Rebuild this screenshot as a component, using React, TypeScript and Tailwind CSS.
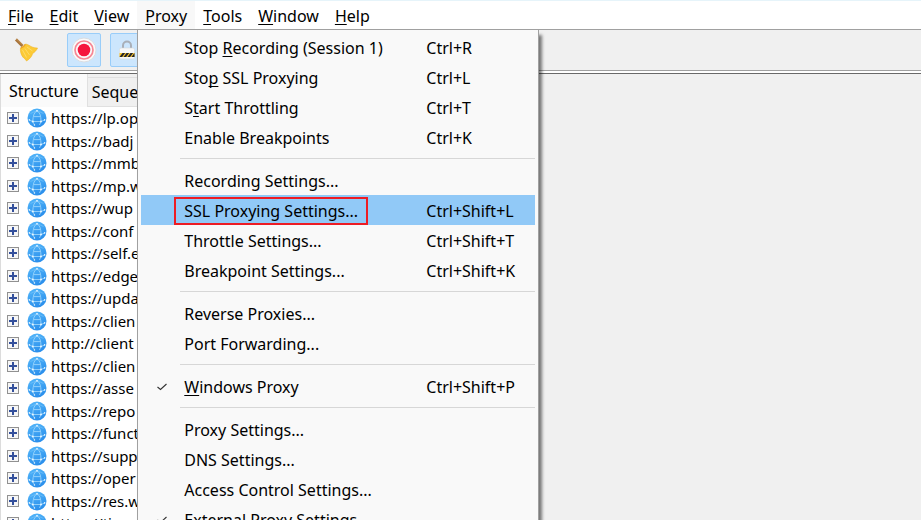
import { Fragment, ReactNode } from 'react';
import clsx from 'clsx';

interface MenuEntry {
    label: string;
    mnemonic?: number;
    shortcut?: string;
    checked?: boolean;
    selected?: boolean;
}

const MENU_BAR = ['File', 'Edit', 'View', 'Proxy', 'Tools', 'Window', 'Help'];

const PROXY_MENU: MenuEntry[][] = [
    [
        { label: 'Stop Recording (Session 1)', mnemonic: 5, shortcut: 'Ctrl+R' },
        { label: 'Stop SSL Proxying', mnemonic: 3, shortcut: 'Ctrl+L' },
        { label: 'Start Throttling', mnemonic: 1, shortcut: 'Ctrl+T' },
        { label: 'Enable Breakpoints', shortcut: 'Ctrl+K' },
    ],
    [
        { label: 'Recording Settings...' },
        { label: 'SSL Proxying Settings...', shortcut: 'Ctrl+Shift+L', selected: true },
        { label: 'Throttle Settings...', shortcut: 'Ctrl+Shift+T' },
        { label: 'Breakpoint Settings...', shortcut: 'Ctrl+Shift+K' },
    ],
    [{ label: 'Reverse Proxies...' }, { label: 'Port Forwarding...' }],
    [{ label: 'Windows Proxy', mnemonic: 0, shortcut: 'Ctrl+Shift+P', checked: true }],
    [
        { label: 'Proxy Settings...' },
        { label: 'DNS Settings...' },
        { label: 'Access Control Settings...' },
        { label: 'External Proxy Settings...', checked: true },
    ],
];

const HOSTS = [
    'https://lp.op',
    'https://badj',
    'https://mmb',
    'https://mp.w',
    'https://wup',
    'https://conf',
    'https://self.e',
    'https://edge',
    'https://upda',
    'https://clien',
    'http://client',
    'https://clien',
    'https://asse',
    'https://repo',
    'https://funct',
    'https://supp',
    'https://oper',
    'https://res.w',
    'https://tip',
];

const Mnemonic = ({ text, index }: { text: string; index?: number }) => {
    if (index === undefined) return <>{text}</>;
    return (
        <>
            {text.slice(0, index)}
            <span className="underline decoration-1 underline-offset-2 [text-decoration-skip-ink:none]">
                {text[index]}
            </span>
            {text.slice(index + 1)}
        </>
    );
};

const BroomIcon = () => (
    <svg width="24" height="24" viewBox="0 0 24 24" aria-hidden="true">
        <path d="M2 1.5 L8.5 8" stroke="#a8743c" strokeWidth="3" />
        <path d="M2.5 1 L8.8 7" stroke="#c79352" strokeWidth="1" />
        <path
            d="M6.5 10 C8.5 9.6 10.5 8 11.5 6 C14 6.4 16 8 18 9 C20 9.8 21.5 10 23.5 10 C22.5 12.5 20.5 14.5 18.6 15.5 C18 18 16 21 12.5 23 C12 21.4 10 20.6 8.8 19 C7 16.6 6 13 6.5 10 Z"
            fill="#fcca36"
            stroke="#f0b322"
            strokeWidth="0.6"
        />
        <path d="M6.8 10 C8.6 9.4 10.4 8 11.3 6.3" fill="none" stroke="#eda521" strokeWidth="1.4" />
        <path
            d="M8.5 12 L12.5 19.5 M11 10.5 L15.5 17 M13 9 L18.5 13"
            stroke="#fddc6a"
            strokeWidth="1"
            fill="none"
        />
    </svg>
);

const RecordIcon = () => (
    <svg width="26" height="26" viewBox="0 0 26 26" aria-hidden="true">
        <circle cx="13" cy="13" r="12" fill="#fafafa" stroke="#d9dde2" strokeWidth="1" />
        <circle cx="13" cy="13" r="9" fill="none" stroke="#f78794" strokeWidth="1.7" />
        <circle cx="13" cy="13" r="6.3" fill="#f5173e" />
    </svg>
);

const LockIcon = () => (
    <svg width="18" height="20" viewBox="0 0 18 20" aria-hidden="true">
        <path d="M5 10 V5.5 a4 4 0 0 1 8 0 V10" fill="none" stroke="#a9afb8" strokeWidth="2" />
        <rect x="1.5" y="8" width="15" height="11" rx="1.5" fill="#f7f7f7" stroke="#d5d8dc" strokeWidth="0.6" />
        <rect x="1.5" y="13" width="15" height="4" fill="#f8c42c" />
        <path
            d="M1.5 17 l3 -4 h2.6 l-3 4z M5.5 17 l3 -4 h2.6 l-3 4z M9.5 17 l3 -4 h2.6 l-3 4z M13.5 17 l3 -4 V17z"
            fill="#22242a"
        />
    </svg>
);

const GlobeIcon = () => (
    <svg className="shrink-0" width="20" height="20" viewBox="0 0 20 20" aria-hidden="true">
        <defs>
            <linearGradient id="globe" x1="0" y1="0" x2="0.4" y2="1">
                <stop offset="0" stopColor="#55b8fa" />
                <stop offset="1" stopColor="#2c90ec" />
            </linearGradient>
        </defs>
        <circle cx="10" cy="10" r="9.5" fill="url(#globe)" />
        <path
            d="M10 2.5 C7 4.5 6 8 5.8 13.5 H14 C14 8 13 4.5 10 2.5 Z M2.2 12 L5.8 13.5 L7.5 17 M14 13.5 L17.8 12 M14 13.5 L12.5 17 M7 8.6 H13"
            fill="none"
            stroke="#a6dafc"
            strokeWidth="0.8"
        />
        <path d="M3.5 5.5 L10 2.5 L16.5 5.5" fill="none" stroke="#7cc8fb" strokeWidth="0.6" />
        <g fill="#e8f6ff">
            <circle cx="10" cy="2.8" r="0.9" />
            <circle cx="5.8" cy="13.5" r="1" />
            <circle cx="14" cy="13.5" r="1" />
            <circle cx="2.4" cy="11.9" r="0.8" />
            <circle cx="17.6" cy="11.9" r="0.8" />
            <circle cx="7.5" cy="17" r="0.7" />
        </g>
    </svg>
);

const ExpandIcon = () => (
    <svg width="12" height="12" viewBox="0 0 12 12" aria-hidden="true">
        <rect x="0.5" y="0.5" width="11" height="11" fill="#f6f6f6" stroke="#919191" />
        <path d="M2 6 H10 M6 2 V10" stroke="#334f9b" strokeWidth="2" />
    </svg>
);

const CheckIcon = () => (
    <svg width="10" height="8" viewBox="0 0 10 8" aria-hidden="true">
        <path d="M0.5 4 L3.5 6.5 L9.5 1" fill="none" stroke="#333333" strokeWidth="1.1" />
    </svg>
);

const ToolButton = ({ label, active, children }: { label: string; active?: boolean; children: ReactNode }) => (
    <button
        type="button"
        aria-label={label}
        className={clsx(
            'flex size-[34px] items-center justify-center rounded-xs border',
            active ? 'border-[#99cdf9] bg-[#cce6fd]' : 'border-transparent'
        )}
    >
        {children}
    </button>
);

const ProxyMenu = () => (
    <div
        role="menu"
        aria-label="Proxy"
        className="absolute top-full left-0 z-10 w-[402px] border border-[#a0a0a0] bg-[#f9f9f9] px-[3px] py-0.5 shadow-[3px_6px_3px_rgba(0,0,0,0.5)]"
    >
        {PROXY_MENU.map((group, i) => (
            <Fragment key={i}>
                {i > 0 && <hr className="my-1.5 ml-[39px] border-[#d7d7d7]" />}
                {group.map((entry) => (
                    <button
                        key={entry.label}
                        type="button"
                        role="menuitem"
                        className={clsx(
                            'flex h-[30px] w-full items-center pt-0.5 text-left whitespace-nowrap',
                            entry.selected && 'bg-[#91c9f7]'
                        )}
                    >
                        <span className="flex w-[33px] shrink-0 justify-center pl-2">
                            {entry.checked && <CheckIcon />}
                        </span>
                        <span className="flex w-[252px] shrink-0">
                            <span
                                className={clsx(
                                    'border-2 px-2',
                                    entry.selected ? 'border-[#ed1c24]' : 'border-transparent'
                                )}
                            >
                                <Mnemonic text={entry.label} index={entry.mnemonic} />
                            </span>
                        </span>
                        <span>{entry.shortcut}</span>
                    </button>
                ))}
            </Fragment>
        ))}
    </div>
);

const App = () => {
    return (
        <div className="flex h-screen flex-col overflow-hidden bg-[#f0f0f0] font-['Noto_Sans','Open_Sans',sans-serif] text-base leading-6 text-black">
            <nav className="flex h-[30px] shrink-0 border-t border-b border-t-[#e6f4fa] border-b-[#a0a0a0] bg-white">
                {MENU_BAR.map((name) => (
                    <div key={name} className="relative">
                        <button
                            type="button"
                            className={clsx('h-full px-2 pt-0.5', name === 'Proxy' && 'bg-[#f8f8f8]')}
                        >
                            <Mnemonic text={name} index={0} />
                        </button>
                        {name === 'Proxy' && <ProxyMenu />}
                    </div>
                ))}
            </nav>

            <div className="flex h-[41px] shrink-0 items-center gap-[9px] border-b border-[#a0a0a0] pl-[9px]">
                <ToolButton label="Clear">
                    <BroomIcon />
                </ToolButton>
                <span className="w-1.5" />
                <ToolButton label="Record" active>
                    <RecordIcon />
                </ToolButton>
                <ToolButton label="SSL Proxying" active>
                    <LockIcon />
                </ToolButton>
            </div>

            <div className="h-0.5 shrink-0 bg-white" />

            <main className="flex min-h-0 flex-1 border-t border-[#696969]">
                <section className="flex w-72 flex-col border-l border-[#dcdcdc]">
                    <div role="tablist" className="flex shrink-0 items-end">
                        <button
                            type="button"
                            role="tab"
                            aria-selected="true"
                            className="h-[33px] border-r border-[#e0e0e0] bg-[#fafafa] px-2"
                        >
                            Structure
                        </button>
                        <button
                            type="button"
                            role="tab"
                            aria-selected="false"
                            className="h-[30px] border-y border-[#e0e0e0] px-1"
                        >
                            Sequence
                        </button>
                    </div>
                    <ul className="min-h-0 flex-1 overflow-hidden bg-white pl-1.5 text-[15px]">
                        {HOSTS.map((host, i) => (
                            <li key={i} className="flex items-center odd:h-[22px] even:h-[23px]">
                                <button type="button" aria-label="Expand" className="mr-2">
                                    <ExpandIcon />
                                </button>
                                <GlobeIcon />
                                <span className="ml-1 whitespace-nowrap">{host}</span>
                            </li>
                        ))}
                    </ul>
                </section>
            </main>
        </div>
    );
};

export default App;
